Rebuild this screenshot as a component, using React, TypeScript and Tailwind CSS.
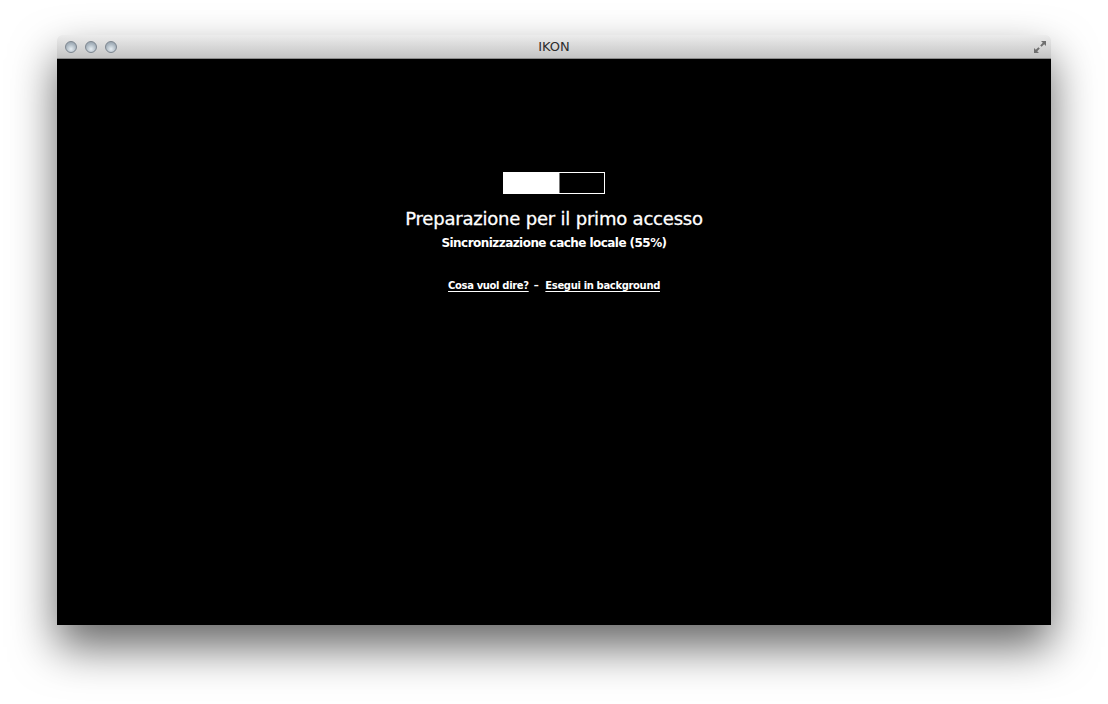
export default function App() {
  return (
    <div className="h-[704px] w-[1108px] overflow-hidden bg-white pl-[57px] pt-[35px]">
      <div className="flex h-[590px] w-[994px] flex-col overflow-hidden rounded-t-[5px] shadow-[0_22px_45px_rgba(0,0,0,0.6)]">
        {/* title bar */}
        <div className="relative flex h-[24px] items-center border-b border-[#8a8a8a] bg-gradient-to-b from-[#ececec] to-[#c4c4c4] px-[8px]">
          <div className="flex gap-[8px]">
            {[0, 1, 2].map((i) => (
              <span
                key={i}
                className="h-[12px] w-[12px] rounded-full border border-[#7d8690] bg-[radial-gradient(circle_at_50%_70%,#e6edf2,#a9b5bf_60%,#8f9aa4)]"
              />
            ))}
          </div>
          <div className="absolute inset-0 flex items-center justify-center font-['DejaVu_Sans',sans-serif] text-[13px] text-[#2e2e2e]">
            IKON
          </div>
          <svg className="absolute right-[4px] top-[5px]" width="14" height="14" viewBox="0 0 14 14">
            <path d="M8 1h5v5l-1.8-1.8-2.6 2.6-1.4-1.4 2.6-2.6z" fill="#6f6f6f" />
            <path d="M6 13H1V8l1.8 1.8 2.6-2.6 1.4 1.4-2.6 2.6z" fill="#6f6f6f" />
          </svg>
        </div>

        {/* body */}
        <div className="flex flex-1 flex-col items-center bg-black pt-[113px] font-['DejaVu_Sans',sans-serif] text-white">
          <div className="flex h-[22px] w-[102px] border border-white">
            <div className="h-full w-[55px] bg-white" />
            <div className="h-full w-px bg-[#777]" />
          </div>
          <h1 className="mt-[12px] text-[18px] leading-[26px] tracking-[-0.2px] [-webkit-text-stroke:0.3px_white]">
            Preparazione per il primo accesso
          </h1>
          <p className="mt-[1px] text-[12px] font-bold leading-[20px] tracking-[-0.55px]">
            Sincronizzazione cache locale (55%)
          </p>
          <div className="mt-[26px] flex items-center gap-[5px] text-[10px] font-bold leading-[14px] tracking-[-0.35px]">
            <a className="underline underline-offset-2" href="#">
              Cosa vuol dire?
            </a>
            <span>–</span>
            <a className="ml-[2px] underline underline-offset-2" href="#">
              Esegui in background
            </a>
          </div>
        </div>
      </div>
    </div>
  );
}
